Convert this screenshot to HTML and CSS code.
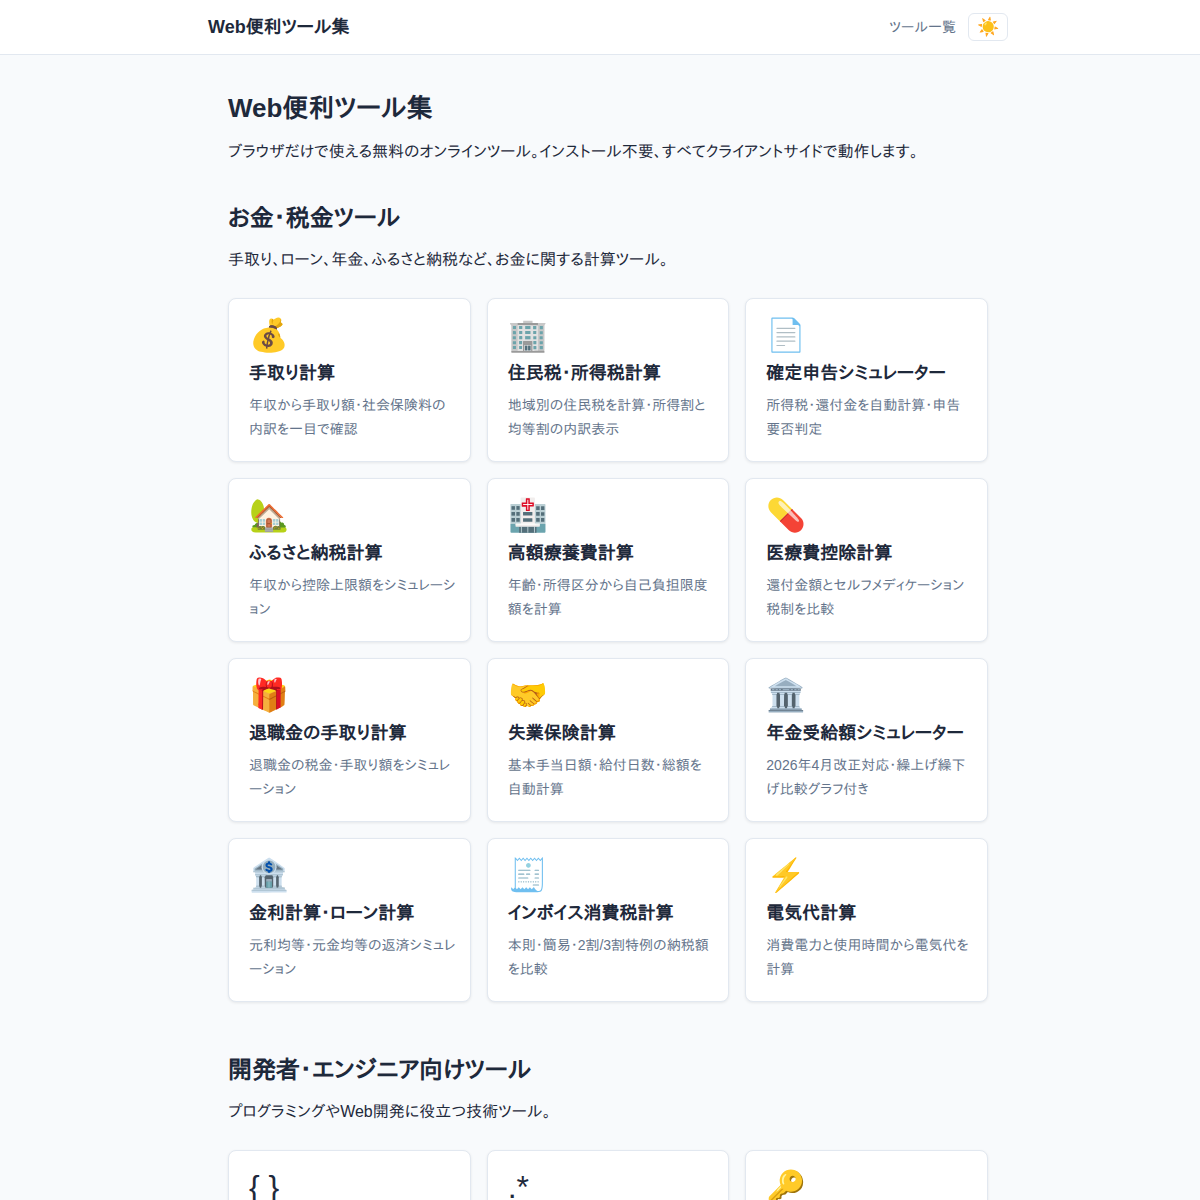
FILE: index.html
```html
<!DOCTYPE html>
<html lang="ja">
<head>
    <meta charset="UTF-8">
    <meta name="viewport" content="width=device-width, initial-scale=1.0">
    <title>Web便利ツール集</title>
    <link rel="stylesheet" href="styles.css">
</head>
<body>

<header class="site-header">
    <div class="header-inner">
        <a href="#" class="site-title">Web便利ツール集</a>
        <nav class="site-nav">
            <a href="#tools">ツール一覧</a>
            <button type="button" class="theme-toggle" aria-label="テーマ切替">☀️</button>
        </nav>
    </div>
</header>

<main class="container" id="tools">
    <h1>Web便利ツール集</h1>
    <p>ブラウザだけで使える無料のオンラインツール。インストール不要、すべてクライアントサイドで動作します。</p>

    <!-- お金・税金 -->
    <section class="category">
        <h2>お金・税金ツール</h2>
        <p>手取り、ローン、年金、ふるさと納税など、お金に関する計算ツール。</p>
        <div class="tool-grid">
            <a href="#" class="tool-card">
                <div class="icon">💰</div>
                <h3>手取り計算</h3>
                <p>年収から手取り額・社会保険料の内訳を一目で確認</p>
            </a>
            <a href="#" class="tool-card">
                <div class="icon">🏢</div>
                <h3>住民税・所得税計算</h3>
                <p>地域別の住民税を計算・所得割と均等割の内訳表示</p>
            </a>
            <a href="#" class="tool-card">
                <div class="icon">📄</div>
                <h3>確定申告シミュレーター</h3>
                <p>所得税・還付金を自動計算・申告要否判定</p>
            </a>
            <a href="#" class="tool-card">
                <div class="icon">🏡</div>
                <h3>ふるさと納税計算</h3>
                <p>年収から控除上限額をシミュレーション</p>
            </a>
            <a href="#" class="tool-card">
                <div class="icon">🏥</div>
                <h3>高額療養費計算</h3>
                <p>年齢・所得区分から自己負担限度額を計算</p>
            </a>
            <a href="#" class="tool-card">
                <div class="icon">💊</div>
                <h3>医療費控除計算</h3>
                <p>還付金額とセルフメディケーション税制を比較</p>
            </a>
            <a href="#" class="tool-card">
                <div class="icon">🎁</div>
                <h3>退職金の手取り計算</h3>
                <p>退職金の税金・手取り額をシミュレーション</p>
            </a>
            <a href="#" class="tool-card">
                <div class="icon">🤝</div>
                <h3>失業保険計算</h3>
                <p>基本手当日額・給付日数・総額を自動計算</p>
            </a>
            <a href="#" class="tool-card">
                <div class="icon">🏛️</div>
                <h3>年金受給額シミュレーター</h3>
                <p>2026年4月改正対応・繰上げ繰下げ比較グラフ付き</p>
            </a>
            <a href="#" class="tool-card">
                <div class="icon">🏦</div>
                <h3>金利計算・ローン計算</h3>
                <p>元利均等・元金均等の返済シミュレーション</p>
            </a>
            <a href="#" class="tool-card">
                <div class="icon">🧾</div>
                <h3>インボイス消費税計算</h3>
                <p>本則・簡易・2割/3割特例の納税額を比較</p>
            </a>
            <a href="#" class="tool-card">
                <div class="icon">⚡</div>
                <h3>電気代計算</h3>
                <p>消費電力と使用時間から電気代を計算</p>
            </a>
        </div>
    </section>

    <!-- 開発者向け -->
    <section class="category">
        <h2>開発者・エンジニア向けツール</h2>
        <p>プログラミングやWeb開発に役立つ技術ツール。</p>
        <div class="tool-grid">
            <a href="#" class="tool-card">
                <div class="icon">{ }</div>
            </a>
            <a href="#" class="tool-card">
                <div class="icon">.*</div>
            </a>
            <a href="#" class="tool-card">
                <div class="icon">🔑</div>
            </a>
        </div>
    </section>
</main>

</body>
</html>
```
FILE: styles.css
```css
* { margin: 0; padding: 0; box-sizing: border-box; }

body {
    font-family: "Liberation Sans", "IPAPGothic", "Noto Sans CJK JP", sans-serif;
    font-size: 16px;
    line-height: 28px;
    color: #1e293b;
    background: #f8fafc;
}

a { color: inherit; text-decoration: none; }

/* ヘッダー */
.site-header { background: #fff; border-bottom: 1px solid #e2e8f0; padding: 13px 0; }
.header-inner { max-width: 816px; margin: 0 auto; padding-left: 16px; display: flex; justify-content: space-between; align-items: center; }
.site-title { font-size: 18px; line-height: 26px; font-weight: bold; }
.site-nav { display: flex; align-items: center; gap: 12px; }
.site-nav a { font-size: 14px; color: #64748b; }
.theme-toggle { font: inherit; font-size: 18px; line-height: 20px; padding: 3px 8px; background: none; border: 1px solid #e2e8f0; border-radius: 6px; cursor: pointer; }

/* コンテンツ */
.container { max-width: 816px; margin: 0 auto; padding: 33px 20px 32px 36px; }
h1 { font-size: 26px; line-height: 40px; margin-bottom: 10px; }
h2 { font-size: 24px; line-height: 36px; margin-bottom: 10px; }
.category { padding-top: 34px; margin-bottom: 16px; }

/* ツールカード */
.tool-grid { display: grid; grid-template-columns: repeat(3, 1fr); gap: 16px; margin-top: 24px; }
.tool-card { display: block; padding: 20px 14px 20px 20px; background: #fff; border: 1px solid #e2e8f0; border-radius: 8px; box-shadow: 0 1px 3px rgba(0, 0, 0, 0.08); }
.tool-card:hover { border-color: #2563eb; }
.tool-card .icon { font-size: 32px; line-height: 32px; margin-bottom: 8px; }
.tool-card h3 { font-size: 18px; line-height: 28px; margin-bottom: 6px; }
.tool-card p { font-size: 14px; line-height: 24px; color: #64748b; }

@media (max-width: 700px) {
    .tool-grid { grid-template-columns: 1fr; }
}
```
